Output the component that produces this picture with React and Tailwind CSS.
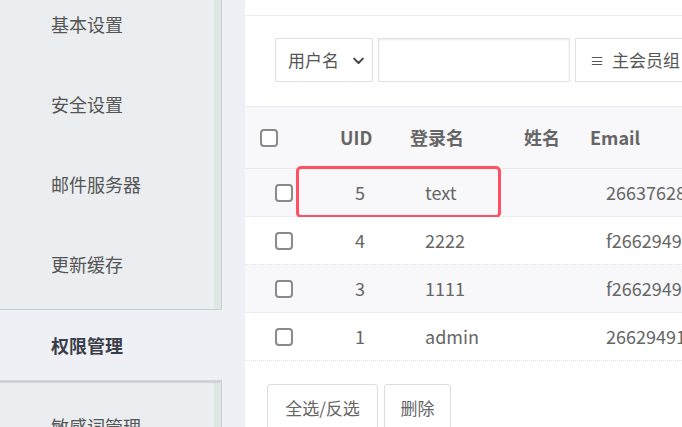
import React from 'react'

const menuTop = ['基本设置', '安全设置', '邮件服务器', '更新缓存']

const rows = [
  { uid: '5', name: 'text', email: '266376282@qq.com', bg: 'bg-[#f8f8fa]' },
  { uid: '4', name: '2222', email: 'f266294912@qq.com', bg: 'bg-white' },
  { uid: '3', name: '1111', email: 'f266294913@qq.com', bg: 'bg-[#f8f8fa]' },
  { uid: '1', name: 'admin', email: '266294912@qq.com', bg: 'bg-white' },
]

const Box = ({ className }) => (
  <span className={'block w-[18px] h-[18px] rounded-[4px] border-2 border-[#8a8a8a] bg-white ' + className} />
)

const App = () => {
  return (
    <div
      className="flex w-[682px] h-[427px] overflow-hidden bg-[#eff0f6]"
      style={{ fontFamily: '"Noto Sans CJK SC", "Noto Sans", sans-serif' }}
    >
      {/* sidebar */}
      <aside className="w-[245px] shrink-0 flex flex-col overflow-hidden">
        <div className="w-[222px] h-[310px] shrink-0 flex bg-[#ebeef0] border-r border-b border-[#c9cdd1]">
          <ul className="flex-1">
            {menuTop.map((m, i) => (
              <li key={m} className={'h-[80px] pl-[51px] text-[18px] text-[#555] flex items-center ' + (i === 0 ? '-mt-[16px]' : '')}>
                {m}
              </li>
            ))}
          </ul>
          <div className="w-[7px] bg-[#e0e6e6]" />
        </div>
        <div className="h-[70px] shrink-0 pl-[51px] flex items-center text-[18px] font-bold text-[#3a3e48]">
          权限管理
        </div>
        <div className="w-[222px] h-[80px] shrink-0 flex bg-[#ebeef0] border-r border-t-[3px] border-[#cfd2d7] border-r-[#c9cdd1]">
          <div className="flex-1 pl-[51px] pt-[31px] text-[18px] text-[#555] leading-[24px]">敏感词管理</div>
          <div className="w-[7px] bg-[#e0e6e6]" />
        </div>
      </aside>

      {/* main */}
      <main className="flex-1 min-w-0 bg-white flex flex-col text-[#666] overflow-hidden">
        <div className="h-[16px] shrink-0 border-b border-[#ececec]" />
        <div className="h-[91px] shrink-0 flex items-start pt-[22px] pl-[30px] gap-[5px] border-b border-[#ececec]">
          <div className="w-[98px] h-[44px] shrink-0 border border-[#e2e2e2] flex items-center pl-[12px] pr-[6px] justify-between text-[17px] text-[#555]">
            <span>用户名</span>
            <svg width="15" height="15" viewBox="0 0 24 24" fill="none" stroke="#444" strokeWidth="3.2" strokeLinecap="round" strokeLinejoin="round">
              <path d="M5 9l7 7 7-7" />
            </svg>
          </div>
          <div className="w-[192px] h-[44px] shrink-0 border border-[#e2e2e2] shadow-[inset_0_1px_2px_rgba(0,0,0,0.08)]" />
          <div className="w-[140px] h-[44px] shrink-0 border border-[#e2e2e2] flex items-center pl-[14px] text-[17px] text-[#555] whitespace-nowrap">
            <span className="text-[14px] mr-[8px]">≡</span>主会员组
          </div>
        </div>

        {/* table header */}
        <div className="h-[62px] shrink-0 flex items-center bg-[#f8f8fa] border-b border-[#e8e8e8] font-bold text-[18px] whitespace-nowrap">
          <div className="w-[70px] shrink-0"><Box className="ml-[15px]" /></div>
          <div className="w-[95px] shrink-0 pl-[25px]">UID</div>
          <div className="w-[114px] shrink-0">登录名</div>
          <div className="w-[66px] shrink-0">姓名</div>
          <div className="shrink-0">Email</div>
        </div>

        {rows.map((r, i) => (
          <div
            key={r.uid}
            className={'relative h-[48px] shrink-0 flex items-center text-[18px] whitespace-nowrap border-b border-dotted border-[#e2e2e2] ' + r.bg}
          >
            <div className="w-[70px] shrink-0"><Box className="ml-[30px]" /></div>
            <div className="w-[110px] shrink-0 pl-[40px]">{r.uid}</div>
            <div className="w-[181px] shrink-0">{r.name}</div>
            <div className="shrink-0">{r.email}</div>
            {i === 0 && (
              <span className="absolute left-[51px] top-[-3px] w-[205px] h-[52px] rounded-[5px] border-[3px] border-[#ff5064]" />
            )}
          </div>
        ))}

        <div className="flex shrink-0 gap-[6px] pl-[22px] pt-[23px]">
          <button className="w-[111px] h-[48px] shrink-0 border border-[#ddd] rounded-[3px] text-[17px] text-[#666] bg-white">全选/反选</button>
          <button className="w-[67px] h-[48px] shrink-0 border border-[#ddd] rounded-[3px] text-[17px] text-[#666] bg-white">删除</button>
        </div>
      </main>
    </div>
  )
}

export default App
